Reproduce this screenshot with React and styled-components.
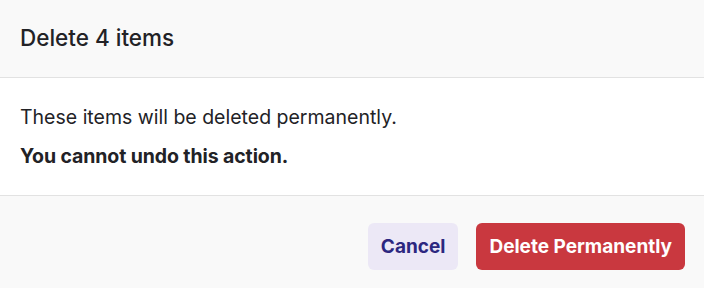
import React from 'react';
import styled, { createGlobalStyle } from 'styled-components';

const GlobalStyle = createGlobalStyle`
  html, body {
    margin: 0;
    padding: 0;
    background: #fff;
  }
  body {
    font-family: Inter, "Noto Sans", sans-serif;
    color: #1f1f23;
  }
`;

const Dialog = styled.div`
  width: 704px;
  height: 288px;
  display: flex;
  flex-direction: column;
  background: #fff;
`;

const Header = styled.div`
  height: 78px;
  box-sizing: border-box;
  display: flex;
  align-items: center;
  padding: 0 20px 2px;
  background: #f9f9f9;
  border-bottom: 1px solid #e2e2e2;
`;

const Title = styled.h2`
  margin: 0;
  font-size: 22.5px;
  font-weight: 500;
  color: #222226;
`;

const Body = styled.div`
  height: 118px;
  box-sizing: border-box;
  padding: 24px 20px 0;
  display: flex;
  flex-direction: column;
  gap: 8px;
  border-bottom: 1px solid #e2e2e2;
`;

const Text = styled.p`
  margin: 0;
  font-size: 19.5px;
  line-height: 31px;
  font-weight: ${p => (p.$strong ? 700 : 400)};
  letter-spacing: ${p => (p.$strong ? '-0.1px' : '0')};
  color: #222226;
`;

const Footer = styled.div`
  flex: 1;
  display: flex;
  justify-content: flex-end;
  align-items: center;
  gap: 18px;
  padding: 9px 19px 0;
  background: #f9f9f9;
`;

const Button = styled.button`
  height: 47px;
  padding: 0 13px;
  border: none;
  border-radius: 6px;
  font-family: Inter, "Noto Sans", sans-serif;
  font-size: 19px;
  font-weight: 700;
  cursor: pointer;
  background: ${p => (p.$danger ? '#c9383f' : '#ece8f6')};
  color: ${p => (p.$danger ? '#fff' : '#2c2780')};
`;

const App = () => (
  <>
    <GlobalStyle />
    <Dialog>
      <Header>
        <Title>Delete 4 items</Title>
      </Header>
      <Body>
        <Text>These items will be deleted permanently.</Text>
        <Text $strong>You cannot undo this action.</Text>
      </Body>
      <Footer>
        <Button>Cancel</Button>
        <Button $danger>Delete Permanently</Button>
      </Footer>
    </Dialog>
  </>
);

export default App;
